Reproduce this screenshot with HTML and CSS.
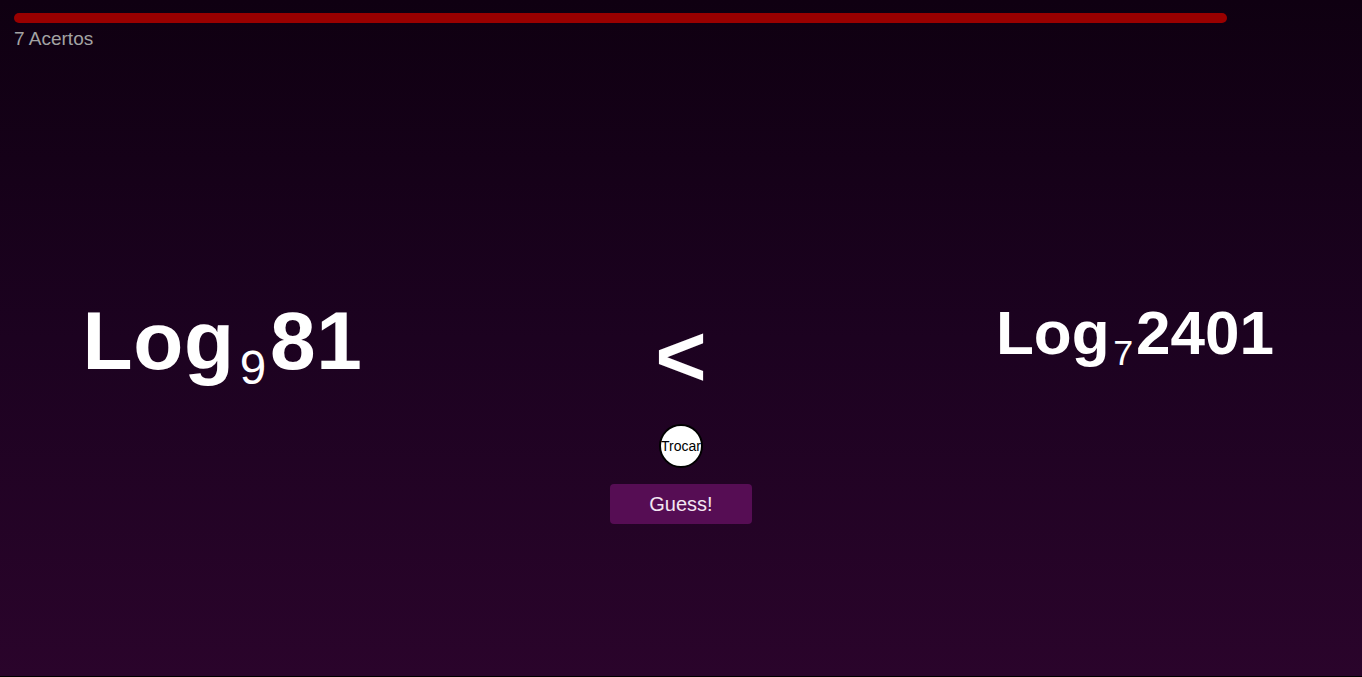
FILE: index.html
```html
<!DOCTYPE html>
<html lang="pt">
<head>
<meta charset="utf-8">
<title>Log Game</title>
<link rel="stylesheet" href="styles.css">
</head>
<body>
<div class="page">
  <header class="top">
    <div class="track"><div class="fill" style="width: 90.93%"></div></div>
    <div class="score">7 Acertos</div>
  </header>
  <main class="board">
    <div class="col col-left">
      <div class="expr expr-big">Log<span class="base">9</span>81</div>
    </div>
    <div class="col col-mid">
      <div class="sign">&lt;</div>
      <button class="swap" type="button">Trocar</button>
      <button class="guess" type="button">Guess!</button>
    </div>
    <div class="col col-right">
      <div class="expr expr-small">Log<span class="base">7</span>2401</div>
    </div>
  </main>
</div>
</body>
</html>
```
FILE: styles.css
```css
html {
  background: #000;
}
body {
  margin: 0;
  font-family: "Liberation Sans", Arial, sans-serif;
}
.page {
  height: 676px;
  background: linear-gradient(to bottom, #0f0011 0%, #1c0220 50%, #2a042b 100%);
  display: flex;
  flex-direction: column;
  overflow: hidden;
}
.top {
  padding: 13px 14px 0 14px;
}
.track {
  height: 10px;
}
.fill {
  height: 10px;
  background: #990000;
  border-radius: 5px;
}
.score {
  margin-top: 5px;
  font-size: 19px;
  line-height: 22px;
  color: #a3a3a3;
}
.board {
  display: grid;
  grid-template-columns: 454px 454px 454px;
  align-items: start;
}
.col {
  display: flex;
  flex-direction: column;
  align-items: center;
}
.col-left {
  padding: 250px 0 0 0;
}
.col-right {
  padding: 252px 0 0 0;
}
.col-mid {
  padding-top: 262px;
}
.expr {
  color: #fff;
  font-weight: bold;
  line-height: 1;
  white-space: nowrap;
}
.expr-big {
  font-size: 82px;
  letter-spacing: 0.7px;
  margin-right: 9px;
}
.expr-small {
  font-size: 62px;
}
.base {
  font-weight: normal;
  font-size: 0.58em;
  letter-spacing: 0;
  vertical-align: -0.31em;
  margin: 0 0.08em 0 0.1em;
}
.sign {
  color: #fff;
  font-weight: bold;
  font-size: 88px;
  line-height: 1;
}
.swap {
  margin-top: 24px;
  width: 44px;
  height: 44px;
  border-radius: 50%;
  border: 2px solid #000;
  background: #fff;
  color: #000;
  font-family: "Liberation Sans", Arial, sans-serif;
  font-size: 14px;
  padding: 0;
  display: flex;
  align-items: center;
  justify-content: center;
  overflow: visible;
  white-space: nowrap;
}
.guess {
  margin-top: 16px;
  width: 142px;
  height: 40px;
  border: 0;
  border-radius: 4px;
  background: #560d54;
  color: #f3e6f2;
  font-family: "Liberation Sans", Arial, sans-serif;
  font-size: 20px;
  padding: 0;
}
```
